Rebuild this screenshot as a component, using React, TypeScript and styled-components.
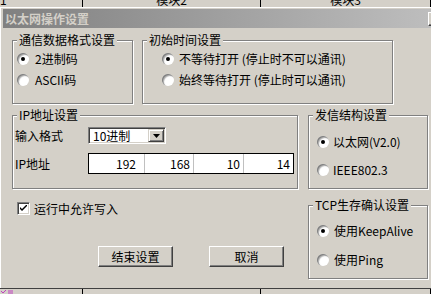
import { FC } from 'react';
import styled, { createGlobalStyle } from 'styled-components';

const FACE = '#d4d0c8';
const SHADOW = '#808080';
const DARK = '#404040';

const GlobalStyle = createGlobalStyle`
  html, body {
    margin: 0;
    padding: 0;
    background: ${FACE};
  }
  body {
    font-family: "Noto Sans CJK SC", "Liberation Sans", sans-serif;
    font-size: 12px;
    color: #000;
  }
`;

const Screen = styled.div`
  width: 431px;
  height: 294px;
  overflow: hidden;
  display: flex;
  flex-direction: column;
  background: ${FACE};
`;

const GridStrip = styled.div<{ h: number; top?: boolean }>`
  display: flex;
  flex-shrink: 0;
  height: ${({ h }) => h}px;
  overflow: hidden;
  border-top: ${({ top }) => (top ? `1px solid ${DARK}` : 'none')};
`;

const GridCell = styled.div<{ w?: number; align?: string }>`
  width: ${({ w }) => (w ? `${w}px` : 'auto')};
  flex: ${({ w }) => (w ? '0 0 auto' : '1')};
  border-right: 1px solid #000;
  display: flex;
  align-items: flex-end;
  justify-content: ${({ align }) => align || 'center'};
  line-height: 14px;
  overflow: hidden;
  white-space: nowrap;
`;

const Window = styled.div`
  flex: 1;
  width: 445px;
  display: flex;
  flex-direction: column;
  border-top: 1px solid #fff;
  border-left: 1px solid #fff;
  padding: 1px 0 0 2px;
`;

const TitleBar = styled.div`
  height: 19px;
  flex-shrink: 0;
  display: flex;
  align-items: center;
  padding-left: 2px;
  background: linear-gradient(to right, #808080, #c0c0c0);
`;

const TitleText = styled.span`
  font-weight: bold;
  color: ${FACE};
  line-height: 14px;
`;

const CloseButton = styled.span`
  margin-left: auto;
  margin-right: 4px;
  width: 16px;
  height: 14px;
  box-sizing: border-box;
  background: ${FACE};
  border: 1px solid;
  border-color: #fff ${DARK} ${DARK} #fff;
  box-shadow: inset -1px -1px 0 ${SHADOW};
  font-size: 11px;
  font-weight: bold;
  line-height: 11px;
  text-align: center;
`;

const Body = styled.div`
  flex: 1;
  padding: 5px 0 0 9px;
  display: flex;
  flex-direction: column;
`;

const Row = styled.div<{ gap: number; mt?: number }>`
  display: flex;
  gap: ${({ gap }) => gap}px;
  margin-top: ${({ mt }) => mt || 0}px;
`;

const Column = styled.div<{ w: number }>`
  width: ${({ w }) => w}px;
  display: flex;
  flex-direction: column;
`;

const Group = styled.fieldset<{ w: number; h: number; mt?: number }>`
  margin: ${({ mt }) => mt || 0}px 0 0 0;
  padding: 0;
  min-width: 0;
  width: ${({ w }) => w}px;
  height: ${({ h }) => h}px;
  box-sizing: border-box;
  border: 1px solid ${SHADOW};
  box-shadow: 1px 1px 0 #fff, inset 1px 1px 0 #fff;
`;

const Legend = styled.legend`
  margin-left: 4px;
  padding: 0 2px;
  line-height: 14px;
  background: ${FACE};
  white-space: nowrap;
`;

const GroupContent = styled.div<{ pl: number; pt: number }>`
  display: flex;
  flex-direction: column;
  padding: ${({ pt }) => pt}px 0 0 ${({ pl }) => pl}px;
`;

const RadioRow = styled.label<{ h: number; gap: number }>`
  display: flex;
  align-items: center;
  height: ${({ h }) => h}px;
  gap: ${({ gap }) => gap}px;
  line-height: 14px;
  white-space: nowrap;
`;

const RadioMark = styled.span<{ on?: boolean }>`
  position: relative;
  flex-shrink: 0;
  width: 12px;
  height: 12px;
  border-radius: 50%;
  background: #fff;
  box-shadow: inset 1px 1px 0 ${SHADOW}, inset 2px 2px 1px #b0b0b0;
  &::after {
    content: '';
    display: ${({ on }) => (on ? 'block' : 'none')};
    position: absolute;
    left: 4px;
    top: 4px;
    width: 4px;
    height: 4px;
    border-radius: 50%;
    background: #000;
  }
`;

const FieldRow = styled.div<{ h: number; mt?: number }>`
  display: flex;
  align-items: center;
  height: ${({ h }) => h}px;
  margin-top: ${({ mt }) => mt || 0}px;
`;

const FieldLabel = styled.span`
  width: 73px;
  flex-shrink: 0;
  line-height: 14px;
`;

const Select = styled.div`
  width: 78px;
  height: 17px;
  box-sizing: border-box;
  display: flex;
  align-items: center;
  background: #fff;
  border: 1px solid;
  border-color: ${SHADOW} #fff #fff ${SHADOW};
  box-shadow: inset 1px 1px 0 ${DARK}, inset -1px -1px 0 ${FACE};
  padding: 1px 1px 1px 4px;
  line-height: 14px;
`;

const DropButton = styled.span`
  margin-left: auto;
  width: 16px;
  height: 13px;
  box-sizing: border-box;
  display: flex;
  align-items: center;
  justify-content: center;
  background: ${FACE};
  border: 1px solid;
  border-color: ${FACE} ${DARK} ${DARK} ${FACE};
  box-shadow: inset 1px 1px 0 #fff, inset -1px -1px 0 ${SHADOW};
`;

const IpBox = styled.div`
  display: flex;
  height: 21px;
  box-sizing: border-box;
  background: #fff;
  border: 1px solid #000;
`;

const IpCell = styled.span<{ w: number; pr: number; last?: boolean }>`
  width: ${({ w }) => w}px;
  box-sizing: border-box;
  padding-right: ${({ pr }) => pr}px;
  border-right: ${({ last }) => (last ? 'none' : '1px solid #c0c0c0')};
  display: flex;
  align-items: center;
  justify-content: flex-end;
  line-height: 14px;
`;

const CheckRow = styled.label`
  display: flex;
  align-items: center;
  gap: 4px;
  height: 13px;
  margin-top: 13px;
  padding-left: 5px;
  line-height: 14px;
`;

const CheckMark = styled.span`
  width: 13px;
  height: 13px;
  box-sizing: border-box;
  display: flex;
  align-items: center;
  justify-content: center;
  background: #fff;
  border: 1px solid;
  border-color: ${SHADOW} #fff #fff ${SHADOW};
  box-shadow: inset 1px 1px 0 ${DARK}, inset -1px -1px 0 ${FACE};
`;

const ButtonRow = styled.div`
  display: flex;
  gap: 36px;
  margin-top: 31px;
  padding-left: 86px;
`;

const Button = styled.button`
  width: 75px;
  height: 21px;
  padding: 0;
  box-sizing: border-box;
  background: ${FACE};
  border: 1px solid;
  border-color: #fff ${DARK} ${DARK} #fff;
  box-shadow: inset -1px -1px 0 ${SHADOW};
  font-family: inherit;
  font-size: 12px;
  line-height: 14px;
  color: #000;
`;

interface RadioProp {
  label: string;
  on?: boolean;
  h: number;
  gap: number;
}

const Radio: FC<RadioProp> = ({ label, on, h, gap }) => (
  <RadioRow h={h} gap={gap}>
    <RadioMark on={on} />
    <span>{label}</span>
  </RadioRow>
);

const ipParts = [
  { v: '192', w: 56, pr: 8 },
  { v: '168', w: 49, pr: 3 },
  { v: '10', w: 50, pr: 3 },
  { v: '14', w: 49, pr: 3 },
];

export default function App() {
  return (
    <>
      <GlobalStyle />
      <Screen>
        <GridStrip h={7}>
          <GridCell w={82} align="flex-start">1</GridCell>
          <GridCell w={177}>模块2</GridCell>
          <GridCell>模块3</GridCell>
        </GridStrip>

        <Window>
          <TitleBar>
            <TitleText>以太网操作设置</TitleText>
            <CloseButton>×</CloseButton>
          </TitleBar>

          <Body>
            <Row gap={9}>
              <Group w={121} h={71}>
                <Legend>通信数据格式设置</Legend>
                <GroupContent pl={4} pt={1}>
                  <Radio label="2进制码" on h={21} gap={6} />
                  <Radio label="ASCII码" h={21} gap={6} />
                </GroupContent>
              </Group>
              <Group w={251} h={71}>
                <Legend>初始时间设置</Legend>
                <GroupContent pl={19} pt={1}>
                  <Radio label="不等待打开 (停止时不可以通讯)" on h={21} gap={5} />
                  <Radio label="始终等待打开 (停止时可以通讯)" h={21} gap={5} />
                </GroupContent>
              </Group>
            </Row>

            <Row gap={10} mt={4}>
              <Column w={286}>
                <Group w={286} h={81}>
                  <Legend>IP地址设置</Legend>
                  <GroupContent pl={2} pt={5}>
                    <FieldRow h={17}>
                      <FieldLabel>输入格式</FieldLabel>
                      <Select>
                        10进制
                        <DropButton>
                          <svg width="7" height="4" viewBox="0 0 7 4">
                            <path d="M0 0h7L3.5 4z" fill="#000" />
                          </svg>
                        </DropButton>
                      </Select>
                    </FieldRow>
                    <FieldRow h={21} mt={9}>
                      <FieldLabel>IP地址</FieldLabel>
                      <IpBox>
                        {ipParts.map((p, i) => (
                          <IpCell key={p.v + i} w={p.w} pr={p.pr} last={i === ipParts.length - 1}>
                            {p.v}
                          </IpCell>
                        ))}
                      </IpBox>
                    </FieldRow>
                  </GroupContent>
                </Group>

                <CheckRow>
                  <CheckMark>
                    <svg width="7" height="7" viewBox="0 0 7 7">
                      <path d="M0 2l2 2 5-5v2l-5 5-2-2z" fill="#000" />
                    </svg>
                  </CheckMark>
                  <span>运行中允许写入</span>
                </CheckRow>

                <ButtonRow>
                  <Button>结束设置</Button>
                  <Button>取消</Button>
                </ButtonRow>
              </Column>

              <Column w={120}>
                <Group w={120} h={81}>
                  <Legend>发信结构设置</Legend>
                  <GroupContent pl={8} pt={6}>
                    <Radio label="以太网(V2.0)" on h={28} gap={4} />
                    <Radio label="IEEE802.3" h={28} gap={4} />
                  </GroupContent>
                </Group>
                <Group w={120} h={81} mt={9}>
                  <Legend>TCP生存确认设置</Legend>
                  <GroupContent pl={8} pt={5}>
                    <Radio label="使用KeepAlive" on h={28} gap={5} />
                    <Radio label="使用Ping" h={29} gap={5} />
                  </GroupContent>
                </Group>
              </Column>
            </Row>
          </Body>
        </Window>

        <GridStrip h={5} top>
          <GridCell w={82} align="flex-start">
            <svg width="14" height="4" viewBox="0 0 14 4">
              <path d="M1 1l2 2 3-3M8 1h5M8 3h5" stroke="#c040c0" strokeWidth="1" fill="none" />
            </svg>
          </GridCell>
          <GridCell w={177} />
          <GridCell />
        </GridStrip>
      </Screen>
    </>
  );
}
